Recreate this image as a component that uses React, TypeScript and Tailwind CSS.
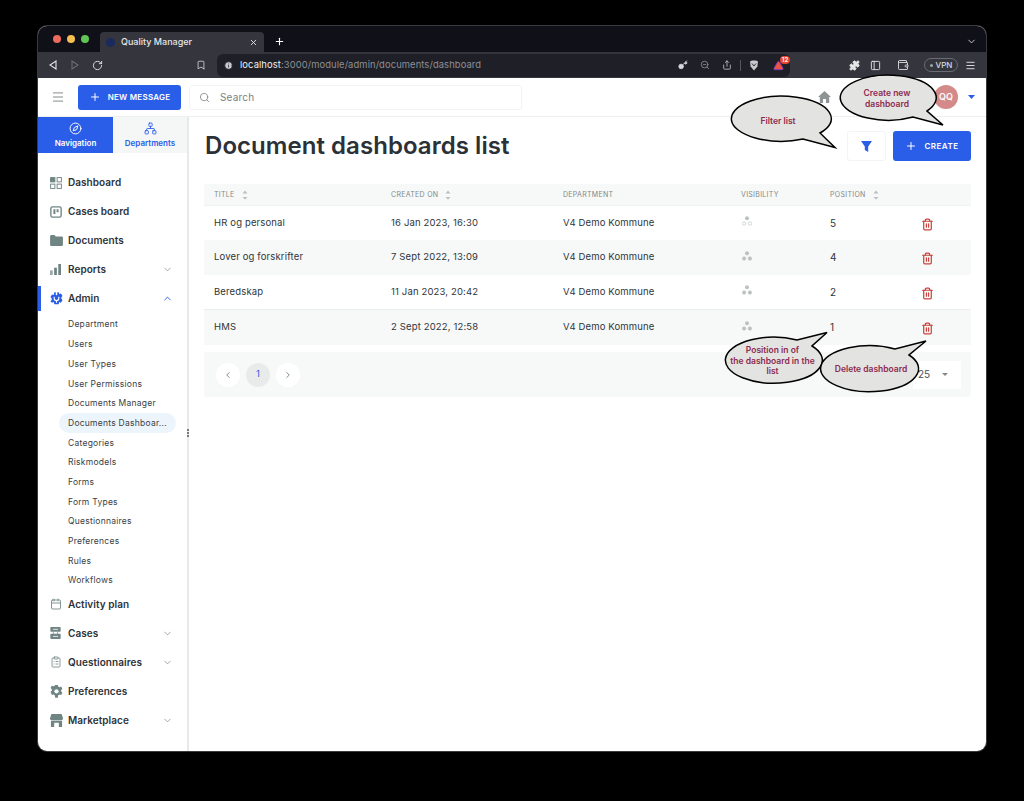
import React from "react";
import { Menu, Plus, Search, ChevronDown, ChevronUp, ChevronLeft, ChevronRight, X, RotateCw, Bookmark, Key, ZoomOut, Share, Puzzle, PanelLeft, Wallet, Compass, Network, Calendar, ClipboardList, Trash2, Triangle, Info } from "lucide-react";

function Sort() {
  return (
    <svg width="6" height="10" viewBox="0 0 6 10" className="ml-[7px] shrink-0">
      <path d="M3 0.5 L5.5 3.5 H0.5Z M0.5 7 H5.5 L3 9.5Z" fill="#b9bfbf" />
    </svg>
  );
}

function GridIcon() {
  return (
    <svg width="12" height="12" viewBox="0 0 14 14" fill="none" stroke="#6f8583" strokeWidth="1.1">
      <rect x="0.7" y="0.7" width="5" height="5" fill="#6f8583" />
      <rect x="8.3" y="0.7" width="5" height="5" />
      <rect x="0.7" y="8.3" width="5" height="5" />
      <rect x="8.3" y="8.3" width="5" height="5" />
    </svg>
  );
}
function BoardIcon() {
  return (
    <svg width="12" height="12" viewBox="0 0 14 14" fill="none">
      <rect x="1" y="1" width="12" height="12" rx="2" stroke="#6f8583" strokeWidth="1.6" />
      <path d="M4 3.8h2.3v5.5H4zM7.7 3.8H10v3.6H7.7z" fill="#6f8583" />
    </svg>
  );
}
function FolderIcon() {
  return (
    <svg width="13" height="11" viewBox="0 0 14 12">
      <path d="M0 1.5C0 .7.6 0 1.4 0h3.4L6.2 1.5h6.4c.8 0 1.4.6 1.4 1.4v7.7c0 .8-.6 1.4-1.4 1.4H1.4C.6 12 0 11.4 0 10.6Z" fill="#6f8583" />
    </svg>
  );
}
function BarsIcon() {
  return (
    <svg width="11" height="11" viewBox="0 0 12 12" fill="#6f8583">
      <rect x="0" y="7" width="3" height="5" opacity=".7" />
      <rect x="4.5" y="4" width="3" height="8" />
      <rect x="9" y="0" width="3" height="12" />
    </svg>
  );
}
function AdminIcon() {
  return (
    <svg width="13" height="13" viewBox="0 0 14 14">
      <path d="M4.6 0.4h1.6v2.2a.8.8 0 0 0 1.6 0V0.4h1.6l.5 1.7 1.9-.6 1.7 2.8-1.3 1.3v1.8l1.3 1.3-1.7 2.8-1.9-.6-.5 2.4H4.6l-.5-2.4-1.9.6L.5 9.9l1.3-1.3V6.8L.5 5.5l1.7-2.8 1.9.6Z" fill="#2a5de8" />
      <path d="M4.5 5.2v1.6a2.5 2.5 0 0 0 5 0V5.2M7 8.5v3" stroke="#fff" strokeWidth="1.2" fill="none" />
    </svg>
  );
}
function CasesIcon() {
  return (
    <svg width="11" height="12" viewBox="0 0 12 14" fill="#6f8583">
      <rect x="0" y="0" width="12" height="5.5" rx=".8" />
      <rect x="0" y="8" width="12" height="6" rx=".8" />
      <path d="M3 6h1v2H3zM8 6h1v2H8z" />
      <path d="M3 2.7h6M3 11h6" stroke="#fff" strokeWidth=".9" />
    </svg>
  );
}
function GearIcon() {
  return (
    <svg width="13" height="13" viewBox="0 0 14 14">
      <path d="M5.6 0h2.8l.4 1.9 1.4.7 1.8-.7 1.4 2.5-1.4 1.3v1.6l1.4 1.3-1.4 2.5-1.8-.7-1.4.8L8.4 14H5.6l-.4-2.8-1.4-.8-1.8.7L.6 7.6 2 6.3V4.7L.6 3.4 2 .9l1.8.7 1.4-.7Z" transform="translate(0 -.2)" fill="#6f8583" />
      <circle cx="7" cy="6.8" r="2.3" fill="#fff" />
    </svg>
  );
}
function StoreIcon() {
  return (
    <svg width="13" height="13" viewBox="0 0 14 14" fill="#6f8583">
      <path d="M1.5 0h11L14 4.5C14 6 12.8 6.6 12 6.6H2C1 6.6 0 6 0 4.5Z" />
      <path d="M1 7.4h12V14H9.5V9.5h-5V14H1Z" />
    </svg>
  );
}
function HomeIcon() {
  return (
    <svg width="13" height="12" viewBox="0 0 13 12">
      <path d="M6.5 0 13 6h-1.8v6H8V8H5v4H1.800V6H0Z" fill="#8f9595" />
    </svg>
  );
}
function PeopleDots({ hollow }: { hollow?: boolean }) {
  return (
    <svg width="10" height="10" viewBox="0 0 11 11">
      <circle cx="5.5" cy="2.500" r="2.2" fill="#bcc2c2" />
      <circle cx="2.3" cy="8.3" r="1.9" fill={hollow ? "none" : "#bcc2c2"} stroke="#bcc2c2" strokeWidth=".7" />
      <circle cx="8.7" cy="8.3" r="1.9" fill={hollow ? "none" : "#bcc2c2"} stroke="#bcc2c2" strokeWidth=".7" />
    </svg>
  );
}

function NavItem({ icon, label, arrow, active }: { icon: React.ReactNode; label: string; arrow?: "down" | "up"; active?: boolean }) {
  return (
    <div className="relative flex h-[29px] items-center pl-[12px] pr-[14px]">
      {active && <div className="absolute left-0 top-[2px] h-[25px] w-[3px] bg-[#2a5de8]" />}
      <div className="flex w-[18px] shrink-0 items-center justify-start">{icon}</div>
      <span className="text-[10px] font-semibold tracking-[0.05px] text-[#2d3338]">{label}</span>
      {arrow === "down" && <ChevronDown size={11} strokeWidth={1.6} className="ml-auto text-[#7d8a8a]" />}
      {arrow === "up" && <ChevronUp size={11} strokeWidth={2} className="ml-auto text-[#2a5de8]" />}
    </div>
  );
}

const subItems = ["Department", "Users", "User Types", "User Permissions", "Documents Manager", "Documents Dashboar...", "Categories", "Riskmodels", "Forms", "Form Types", "Questionnaires", "Preferences", "Rules", "Workflows"];

const rows = [
  { t: "HR og personal", c: "16 Jan 2023, 16:30", p: "5", hollow: true, bg: "bg-white", h: "h-[34px]" },
  { t: "Lover og forskrifter", c: "7 Sept 2022, 13:09", p: "4", bg: "bg-[#f7f8f8]", h: "h-[35px]" },
  { t: "Beredskap", c: "11 Jan 2023, 20:42", p: "2", bg: "bg-white border-b border-[#eceeee]", h: "h-[35px]" },
  { t: "HMS", c: "2 Sept 2022, 12:58", p: "1", bg: "bg-[#f7f8f8]", h: "h-[35px]" },
];

function Bubble({ d }: { d: string }) {
  return <path d={d} fill="#e3e3e1" stroke="#000" strokeWidth="1.5" strokeLinejoin="miter" />;
}

function BubbleText({ className, children }: { className: string; children: React.ReactNode }) {
  return <div className={`absolute text-center text-[8.5px] font-semibold leading-[10.5px] text-[#8c2a50] ${className}`}>{children}</div>;
}

export default function App() {
  return (
    <div className="relative h-[801px] w-[1024px] overflow-hidden bg-black pl-[38px] pt-[26px] font-['Inter',sans-serif]">
      <div className="flex h-[725px] w-[948px] flex-col overflow-hidden rounded-[9px] bg-white ring-1 ring-[#3a3a3f]">
        {/* tab strip */}
        <div className="flex h-[26px] shrink-0 items-end bg-[#101018] pl-[15px]">
          <div className="mb-[9px] flex items-center gap-[6px] self-end">
            <span className="size-[8px] rounded-full bg-[#ec6a5e]" />
            <span className="size-[8px] rounded-full bg-[#f4bf4f]" />
            <span className="size-[8px] rounded-full bg-[#61c554]" />
          </div>
          <div className="ml-[11px] flex h-[20px] w-[164px] items-center rounded-t-[4px] bg-[#34353d] pl-[6px] pr-[6px]">
            <span className="size-[9px] rounded-full bg-[#1b2a5c]" />
            <span className="ml-[6px] text-[9px] font-medium text-[#e6e6e8]">Quality Manager</span>
            <X size={9} strokeWidth={2.4} className="ml-auto text-[#e6e6e8]" />
          </div>
          <Plus size={11} strokeWidth={2.4} className="mb-[5px] ml-[10px] text-white" />
          <ChevronDown size={11} strokeWidth={2} className="mb-[5px] ml-auto mr-[9px] text-[#d8d8dc]" />
        </div>
        {/* toolbar */}
        <div className="flex h-[26px] shrink-0 items-center bg-[#34353d] pl-[10px] text-[#e6e6e8]">
          <svg width="10" height="10" viewBox="0 0 10 10" fill="none" stroke="#e6e6e8" strokeWidth="1.1"><path d="M8 1v8L2 5Z" /></svg>
          <svg width="10" height="10" viewBox="0 0 10 10" fill="none" stroke="#6b6c74" strokeWidth="1.1" className="ml-[12px]"><path d="M2 1v8l6-4Z" /></svg>
          <RotateCw size={11} strokeWidth={2} className="ml-[12px]" />
          <Bookmark size={10} strokeWidth={1.8} className="ml-[93px]" />
          <div className="ml-[11px] flex h-[23px] w-[573px] items-center rounded-[6px] bg-[#1f2027] pl-[7px]">
            <Info size={9} fill="#c9c9cd" stroke="#1f2027" strokeWidth={2} className="shrink-0" />
            <span className="ml-[7px] text-[9.4px] tracking-[0.1px] text-[#8e8f96]"><span className="text-[#f0f0f2]">localhost</span>:3000/module/admin/documents/dashboard</span>
            <Key size={10} className="ml-auto text-[#d8d8dc]" fill="#d8d8dc" />
            <ZoomOut size={10} className="ml-[12px] text-[#8e8f96]" />
            <Share size={10} className="ml-[12px] text-[#c0c0c4]" />
            <span className="ml-[8px] h-[11px] w-px bg-[#55565e]" />
            <svg width="10" height="11" viewBox="0 0 10 11" className="ml-[8px]"><path d="M1 1.5 3 .5h4l2 1-.6 5L5 10.5 1.6 6.500Z" fill="#c9c9cd" /><path d="M3 3.500 5 6l2-2.500" stroke="#1f2027" strokeWidth=".9" fill="none" /></svg>
            <span className="relative ml-[14px] mr-[6px] flex items-center">
              <Triangle size={11} fill="#f0533a" stroke="#7a3bd0" />
              <span className="absolute -right-[6px] -top-[4px] flex h-[8px] w-[10px] items-center justify-center rounded-full bg-[#e8442e] text-[6px] font-semibold text-white">12</span>
            </span>
          </div>
          <Puzzle size={11} fill="#e6e6e8" className="ml-[59px]" />
          <PanelLeft size={11} strokeWidth={2} className="ml-[10px]" />
          <Wallet size={12} strokeWidth={1.7} className="ml-[16px]" />
          <div className="ml-[15px] flex h-[14px] w-[34px] items-center justify-center gap-[3px] rounded-full border border-[#6a6b73] text-[8px] font-medium text-[#d8d8dc]">
            <span className="size-[3px] rounded-full bg-[#a0a0a6]" />VPN
          </div>
          <Menu size={11} strokeWidth={2} className="ml-[7px]" />
        </div>
        {/* app header */}
        <div className="flex h-[39px] shrink-0 items-center border-b border-[#eef0f0] pl-[13px]">
          <Menu size={14} strokeWidth={1.4} className="text-[#6a7272]" />
          <button className="ml-[13px] flex h-[25px] w-[103px] items-center justify-center gap-[7px] rounded-[3px] bg-[#2a5de8] text-[8px] font-semibold tracking-[0.25px] text-white">
            <Plus size={12} strokeWidth={2} />NEW MESSAGE
          </button>
          <div className="ml-[8px] flex h-[25px] w-[333px] items-center rounded-[3px] border border-[#f2f3f3] pl-[9px]">
            <Search size={11} strokeWidth={1.6} className="text-[#6e7676]" />
            <span className="ml-[10px] text-[10px] tracking-[0.2px] text-[#7a8282]">Search</span>
          </div>
          <div className="ml-[291px] flex size-[22px] items-center justify-center rounded-[3px]">
            <HomeIcon />
          </div>
          <div className="ml-[99px] flex size-[24px] items-center justify-center rounded-full bg-[#d38a89] text-[9px] font-semibold text-white">QQ</div>
          <svg width="7" height="4" viewBox="0 0 7 4" className="ml-[10px]"><path d="M0 0h7L3.500 4Z" fill="#2a5de8" /></svg>
        </div>
        {/* body */}
        <div className="flex min-h-0 flex-1">
          <aside className="relative w-[151px] shrink-0 border-r-2 border-[#e8e9e9]">
            <div className="flex h-[36px]">
              <div className="flex w-[75px] flex-col items-center justify-center gap-[2px] bg-[#2a5de8] text-white">
                <Compass size={13} strokeWidth={1.8} />
                <span className="text-[8px] font-semibold">Navigation</span>
              </div>
              <div className="flex w-[74px] flex-col items-center justify-center gap-[2px] bg-[#f5f6f6] text-[#2a5de8]">
                <Network size={13} strokeWidth={1.6} />
                <span className="text-[8px] font-semibold">Departments</span>
              </div>
            </div>
            <div className="pt-[15px]">
              <NavItem icon={<GridIcon />} label="Dashboard" />
              <NavItem icon={<BoardIcon />} label="Cases board" />
              <NavItem icon={<FolderIcon />} label="Documents" />
              <NavItem icon={<BarsIcon />} label="Reports" arrow="down" />
              <NavItem icon={<AdminIcon />} label="Admin" arrow="up" active />
              <div className="-mb-px pt-[2px]">
                {subItems.map((s, i) => (
                  <div key={s} className="flex h-[19.7px] items-center pl-[21px] pr-[11px]">
                    <div className={`flex h-full w-full items-center rounded-full pl-[9px] text-[8.5px] tracking-[0.25px] text-[#3a4146] ${i === 5 ? "bg-[#ecf5fb]" : ""}`}>{s}</div>
                  </div>
                ))}
              </div>
              <NavItem icon={<Calendar size={12} strokeWidth={1.7} color="#6f8583" />} label="Activity plan" />
              <NavItem icon={<CasesIcon />} label="Cases" arrow="down" />
              <NavItem icon={<ClipboardList size={12} strokeWidth={1.6} color="#6f8583" />} label="Questionnaires" arrow="down" />
              <NavItem icon={<GearIcon />} label="Preferences" />
              <NavItem icon={<StoreIcon />} label="Marketplace" arrow="down" />
            </div>
            <div className="absolute right-[-2px] top-[312px] flex flex-col gap-[1px]">
              <span className="size-[2px] rounded-full bg-[#555]" />
              <span className="size-[2px] rounded-full bg-[#555]" />
              <span className="size-[2px] rounded-full bg-[#555]" />
            </div>
          </aside>
          <main className="min-w-0 flex-1 pl-[15px] pr-[15px]">
            <div className="mb-[10px] flex h-[57px] items-center pl-px pt-[1px]">
              <h1 className="text-[24px] font-semibold tracking-[0.05px] text-[#2b3136]">Document dashboards list</h1>
              <button className="ml-auto flex h-[30px] w-[39px] items-center justify-center rounded-[3px] border border-[#f3f4f4] bg-white">
                <svg width="11" height="11" viewBox="0 0 11 11"><path d="M0 0h11L7.200 5.500V11L3.800 9V5.500Z" fill="#2a5de8" /></svg>
              </button>
              <button className="ml-[7px] flex h-[30px] w-[78px] items-center justify-center gap-[7px] rounded-[3px] bg-[#2a5de8] text-[8px] font-semibold tracking-[0.5px] text-white">
                <Plus size={12} strokeWidth={2} />CREATE
              </button>
            </div>
            <div>
              <div className="flex h-[22px] items-center border-b border-[#f0f1f1] bg-[#f7f8f8] pl-[10px] pt-px text-[7px] tracking-[0.3px] text-[#808888]">
                <div className="flex w-[177px] items-center">TITLE<Sort /></div>
                <div className="flex w-[172px] items-center">CREATED ON<Sort /></div>
                <div className="w-[178px]">DEPARTMENT</div>
                <div className="w-[89px]">VISIBILITY</div>
                <div className="flex items-center">POSITION<Sort /></div>
              </div>
              {rows.map((r) => (
                <div key={r.t} className={`flex items-center pl-[10px] text-[9.5px] tracking-[0.15px] text-[#2f363a] ${r.bg} ${r.h}`}>
                  <div className="w-[177px]">{r.t}</div>
                  <div className="w-[172px]">{r.c}</div>
                  <div className="w-[178px]">V4 Demo Kommune</div>
                  <div className="mb-[4px] w-[89px] pl-px"><PeopleDots hollow={r.hollow} /></div>
                  <div className="w-[91px] text-[10px]">{r.p}</div>
                  <Trash2 size={13} strokeWidth={2.3} className="mt-[2px] text-[#c9463f]" />
                </div>
              ))}
              <div className="mt-[7px] flex h-[45px] items-center rounded-[3px] bg-[#f7f8f8] pl-[12px] pr-[10px]">
                <div className="flex size-[24px] items-center justify-center rounded-full bg-white"><ChevronLeft size={10} className="text-[#6e7676]" /></div>
                <div className="ml-[6px] flex size-[24px] items-center justify-center rounded-full bg-[#e9ebeb] text-[9.5px] text-[#2a5de8]">1</div>
                <div className="ml-[6px] flex size-[24px] items-center justify-center rounded-full bg-white"><ChevronRight size={10} className="text-[#6e7676]" /></div>
                <div className="ml-auto flex h-[28px] w-[48px] items-center bg-white pl-[5px] text-[10px] text-[#4a5256]">
                  25
                  <svg width="6" height="3" viewBox="0 0 6 3" className="ml-[12px]"><path d="M0 0h6L3 3Z" fill="#808888" /></svg>
                </div>
              </div>
            </div>
          </main>
        </div>
      </div>
      {/* callouts lying over the page */}
      <svg width="1024" height="801" viewBox="0 0 1024 801" className="absolute left-0 top-0">
        <Bubble d="M803 139 A50 22.500 0 1 1 820 133 L835 147.500 Z" />
        <Bubble d="M913 117 A48 22.500 0 1 1 927 111 L943 125 Z" />
        <Bubble d="M812 346 A48.500 23 0 1 1 797 340 L827 332.500 Z" />
        <Bubble d="M909 355 A49 23 0 1 1 895 349 L926 341 Z" />
      </svg>
      <BubbleText className="left-[738px] top-[116px] w-[80px]">Filter list</BubbleText>
      <BubbleText className="left-[847px] top-[88px] w-[80px]">Create new<br />dashboard</BubbleText>
      <BubbleText className="left-[724px] top-[345px] w-[97px]">Position in of<br />the dashboard in the<br />list</BubbleText>
      <BubbleText className="left-[822px] top-[364px] w-[98px]">Delete dashboard</BubbleText>
    </div>
  );
}
